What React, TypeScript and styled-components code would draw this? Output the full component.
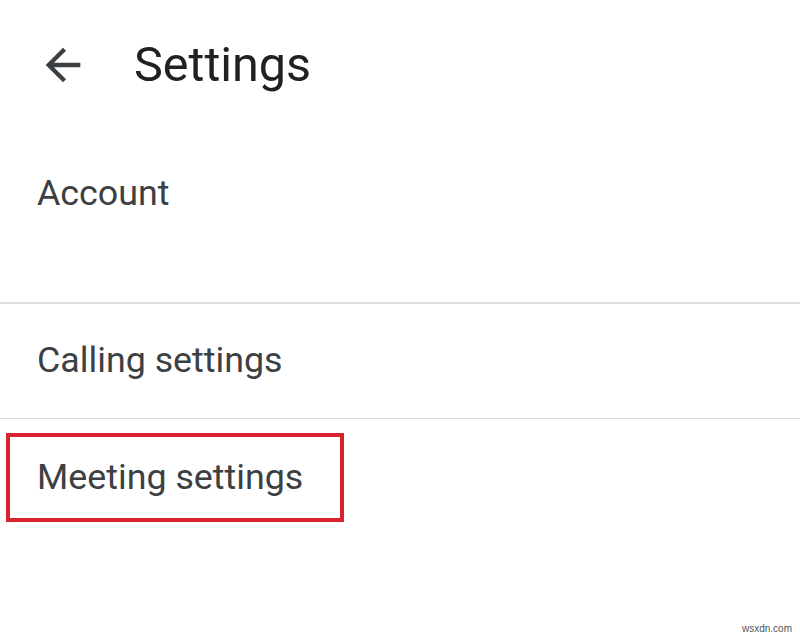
import React from "react";
import styled, { createGlobalStyle } from "styled-components";

const Global = createGlobalStyle`
  html, body { margin: 0; padding: 0; background: #ffffff; }
  body { font-family: Roboto, "Noto Sans", "Liberation Sans", sans-serif; }
`;

const Page = styled.div`
  position: relative;
  width: 800px;
  height: 637px;
  overflow: hidden;
  background: #ffffff;
`;

const Header = styled.header`
  display: flex;
  align-items: center;
  height: 130px;
  padding-left: 37px;
  box-sizing: border-box;
`;

const BackButton = styled.button`
  display: flex;
  align-items: center;
  justify-content: center;
  width: 52px;
  height: 52px;
  padding: 0;
  border: none;
  background: transparent;
  color: #3c4043;
`;

const Title = styled.h1`
  margin: 0 0 0 45px;
  font-size: 48.5px;
  font-weight: 400;
  line-height: 1;
  color: #202124;
`;

const List = styled.ul`
  list-style: none;
  margin: 0;
  padding: 0;
`;

const Row = styled.li<{ $height: number; $padBottom?: number }>`
  position: relative;
  display: flex;
  align-items: center;
  height: ${(p) => p.$height}px;
  padding: 0 0 ${(p) => p.$padBottom ?? 0}px 37px;
  box-sizing: border-box;
`;

const Divider = styled.li`
  height: 1.5px;
  background: #dadce0;
`;

const Label = styled.span`
  font-size: 35.8px;
  line-height: 1;
  color: #3c4043;
  font-weight: 400;
`;

const Highlight = styled.div`
  position: absolute;
  left: 6px;
  top: 14px;
  width: 338px;
  height: 89px;
  border: 4px solid #d9232e;
  box-sizing: border-box;
  pointer-events: none;
`;

const Watermark = styled.div`
  position: absolute;
  right: 8px;
  bottom: 3px;
  font-family: "Liberation Sans", Arial, sans-serif;
  font-size: 10px;
  color: #555;
`;

export default function App() {
  return (
    <Page>
      <Global />
      <Header>
        <BackButton aria-label="Back">
          <svg width="52" height="52" viewBox="0 0 24 24" fill="currentColor">
            <path d="M20 11H7.83l5.59-5.59L12 4l-8 8 8 8 1.41-1.41L7.83 13H20v-2z" />
          </svg>
        </BackButton>
        <Title>Settings</Title>
      </Header>
      <List>
        <Row $height={172} $padBottom={44}>
          <Label>Account</Label>
        </Row>
        <Divider />
        <Row $height={114}>
          <Label>Calling settings</Label>
        </Row>
        <Divider />
        <Row $height={117}>
          <Label>Meeting settings</Label>
          <Highlight />
        </Row>
      </List>
      <Watermark>wsxdn.com</Watermark>
    </Page>
  );
}
